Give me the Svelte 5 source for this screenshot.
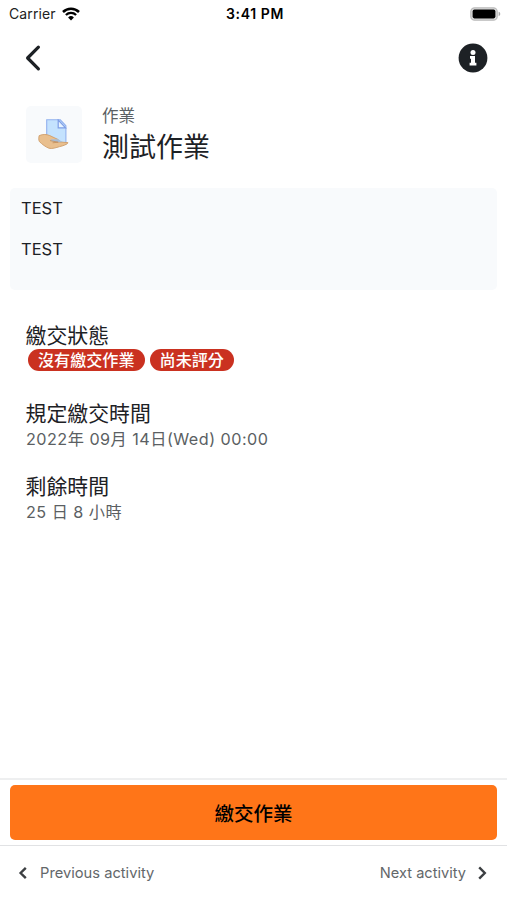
<script>
    let carrier = 'Carrier'
    let time = '3:41 PM'
    let moduleType = '作業'
    let title = '測試作業'
    let description = ['TEST', 'TEST']
    let badges = ['沒有繳交作業', '尚未評分']
    let dates = [
        { label: '規定繳交時間', value: '2022年 09月 14日(Wed) 00:00' },
        { label: '剩餘時間', value: '25 日 8 小時' }
    ]
</script>

<div class="screen">
    <div class="status-bar">
        <div class="carrier">
            <span>{carrier}</span>
            <svg width="18" height="14" viewBox="0 0 18 14">
                <path d="M1 5a11.4 11.4 0 0 1 16 0" fill="none" stroke="#000" stroke-width="2.5" />
                <path d="M3.9 8a7.3 7.3 0 0 1 10.2 0" fill="none" stroke="#000" stroke-width="2.3" />
                <path d="M6.1 10.4a4.2 4.2 0 0 1 5.8 0L9 13.4z" fill="#000" />
            </svg>
        </div>
        <span class="time">{time}</span>
        <svg class="battery" width="31" height="14" viewBox="0 0 31 14">
            <rect x="0.8" y="0.8" width="26.4" height="12.4" rx="3.8" fill="#ddd" stroke="#bbb" stroke-width="1.2" />
            <rect x="2.6" y="2.6" width="22.8" height="8.8" rx="1.8" fill="#000" />
            <path d="M28.6 4.8c2.2.6 2.2 3.8 0 4.4z" fill="#aaa" />
        </svg>
    </div>

    <div class="toolbar">
        <button aria-label="Back">
            <svg width="18" height="28" viewBox="0 0 18 28">
                <path d="M14.4 3.2 3.6 14l10.8 10.8" fill="none" stroke="#1d2125" stroke-width="3.2" stroke-linecap="round" stroke-linejoin="round" />
            </svg>
        </button>
        <button aria-label="Info">
            <svg width="30" height="30" viewBox="0 0 30 30">
                <circle cx="15" cy="15" r="14.4" fill="#1d2125" />
                <circle cx="15" cy="9.4" r="2.5" fill="#fff" />
                <path d="M12 13h5v6.8h1.4v2.8h-6.8v-2.8H13v-4H12z" fill="#fff" />
            </svg>
        </button>
    </div>

    <div class="heading">
        <div class="module-icon">
            <svg width="32" height="32" viewBox="0 0 32 32">
                <path d="M8.7.8h13.6l5.6 6v18.4H8.7z" fill="#c4e2fe" stroke="#92b1ee" stroke-width="1.1" />
                <path d="M20.2 1v7.8h7.4z" fill="#e8f4ff" stroke="#7f9ee6" stroke-width="1.2" />
                <path d="M1.2 16.6c4-1.6 7.4-1.4 10.6 0l8 3.8c1.6.8 1.5 2 .3 2.4l10 .9c-1.4 2-4.8 3-8.4 3.9-3.5 1-7.9 2.6-10.8 1.6-3.2-1.2-6.6-3.8-9.5-6.6-.8-1.4-.8-4-.2-6z" fill="#e9bf8e" stroke="#cf9d69" stroke-width="0.9" />
                <path d="M12.8 20.3h7.4l4.2 2.6-4.4.4-7.2-1.2z" fill="#a9bdd5" />
                <path d="M12 21.6l8.2 1.6-5.6.6" fill="none" stroke="#c18b59" stroke-width="0.8" />
            </svg>
        </div>
        <div class="heading-text">
            <div class="module-type">{moduleType}</div>
            <h1>{title}</h1>
        </div>
    </div>

    <div class="description">
        {#each description as line}
            <p>{line}</p>
        {/each}
    </div>

    <div class="item status">
        <h2>繳交狀態</h2>
        <div class="badges">
            {#each badges as badge}
                <span class="badge">{badge}</span>
            {/each}
        </div>
    </div>
    {#each dates as date}
        <div class="item">
            <h2>{date.label}</h2>
            <p>{date.value}</p>
        </div>
    {/each}

    <div class="footer">
        <div class="submit-wrap">
            <button class="submit">繳交作業</button>
        </div>
        <div class="activity-nav">
            <button class="nav">
                <svg width="10" height="14" viewBox="0 0 10 14">
                    <path d="M7.8 1.8 2.6 7l5.2 5.2" fill="none" stroke="#3c3f42" stroke-width="2.4" />
                </svg>
                <span>Previous activity</span>
            </button>
            <button class="nav">
                <span>Next activity</span>
                <svg width="10" height="14" viewBox="0 0 10 14">
                    <path d="M2.2 1.4 7.8 7l-5.6 5.6" fill="none" stroke="#3c3f42" stroke-width="2.4" />
                </svg>
            </button>
        </div>
    </div>
</div>

<style>
    :global(body) {
        background: #fff;
    }

    .screen {
        display: flex;
        flex-direction: column;
        height: 900px;
        box-sizing: border-box;
        overflow: hidden;
        color: #1d2125;
        font-family: Inter, 'Noto Sans CJK TC', sans-serif;
    }

    h1,
    h2,
    p {
        margin: 0;
        font-weight: 400;
        white-space: nowrap;
    }

    svg {
        display: block;
        flex: none;
    }

    button {
        padding: 0;
        border: none;
        background: none;
        font-family: inherit;
        cursor: pointer;
    }

    .status-bar {
        display: grid;
        grid-template-columns: 1fr auto 1fr;
        align-items: center;
        height: 27px;
        padding: 0 6px 0 9px;
        color: #000;
        font-size: 14px;
    }

    .carrier {
        display: flex;
        align-items: center;
        gap: 6px;
        color: #222;
        letter-spacing: 0.1px;
    }

    .time {
        font-weight: 600;
        letter-spacing: 0.6px;
    }

    .battery {
        justify-self: end;
    }

    .toolbar {
        display: flex;
        align-items: center;
        justify-content: space-between;
        height: 62px;
        padding: 0 19px 0 24px;
    }

    .heading {
        display: flex;
        gap: 20px;
        height: 82px;
        padding: 17px 26px 0;
    }

    .module-icon {
        display: flex;
        align-items: center;
        justify-content: center;
        width: 56px;
        height: 57px;
        border-radius: 5px;
        background: #f8fafc;
    }

    .module-type {
        height: 20px;
        color: #5b5f63;
        font-size: 16.5px;
        line-height: 20px;
    }

    h1 {
        font-size: 27px;
        line-height: 43px;
    }

    .description {
        height: 102px;
        box-sizing: border-box;
        margin: 0 10px;
        padding: 0 11px;
        border-radius: 5px;
        background: #f8fafc;
        font-size: 16.5px;
    }

    .description p {
        height: 41px;
        line-height: 41px;
    }

    .item {
        padding: 0 26px;
        margin-bottom: 22px;
    }

    .status {
        margin-top: 32px;
        margin-bottom: 29px;
    }

    h2 {
        margin-left: -0.5px;
        font-size: 20.9px;
        line-height: 27px;
    }

    .item p {
        color: #5b5f63;
        font-size: 16.2px;
        letter-spacing: 0.47px;
        line-height: 24px;
    }

    .badges {
        display: flex;
        gap: 5px;
        padding-left: 2px;
    }

    .badge {
        height: 22px;
        padding: 0 10px;
        border-radius: 11px;
        background: #ca3120;
        color: #fff;
        font-size: 16.1px;
        font-weight: 500;
        line-height: 22px;
        white-space: nowrap;
    }

    .footer {
        margin-top: auto;
        border-top: 2px solid #eeeff0;
    }

    .submit-wrap {
        height: 66px;
        box-sizing: border-box;
        padding: 5px 10px 0;
        border-bottom: 1px solid #e1e2e4;
    }

    .submit {
        width: 100%;
        height: 55px;
        border-radius: 5px;
        background: #ff7518;
        color: #000;
        font-size: 19.5px;
        font-weight: 500;
    }

    .activity-nav {
        display: flex;
        justify-content: space-between;
        height: 54px;
        padding: 0 20px 0 18px;
    }

    .nav {
        display: flex;
        align-items: center;
        gap: 12px;
        color: #63676a;
        font-size: 14.7px;
    }

    .nav:last-child {
        gap: 11px;
        font-size: 14.6px;
    }
</style>
